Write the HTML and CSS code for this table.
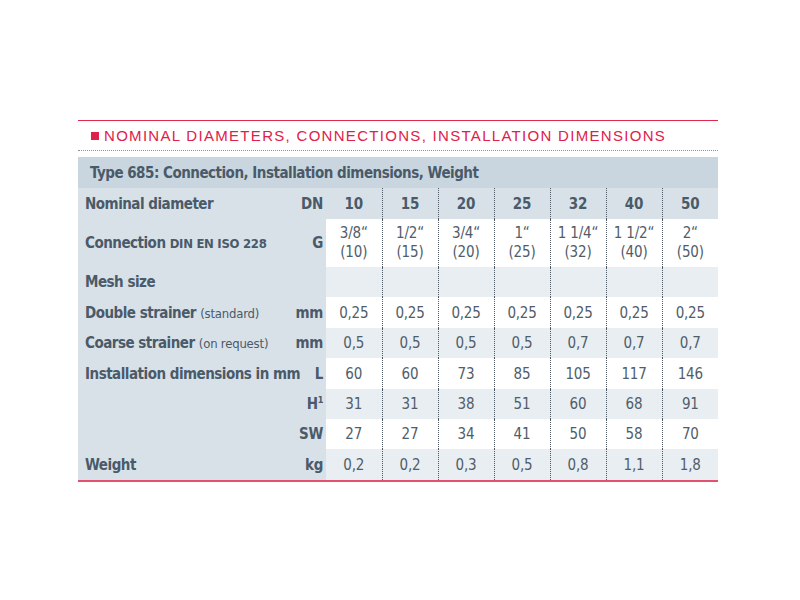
FILE: index.html
```html
<!DOCTYPE html>
<html>
<head>
<meta charset="utf-8">
<link rel="stylesheet" href="styles.css">
</head>
<body>
<div class="sheet">
  <div class="heading"><span class="square"></span>NOMINAL DIAMETERS, CONNECTIONS, INSTALLATION DIMENSIONS</div>
  <table class="spec">
    <colgroup><col class="c-lbl"><col class="c-unit"><col class="c-d"><col class="c-d"><col class="c-d"><col class="c-d"><col class="c-d"><col class="c-d"><col class="c-d"></colgroup>
    <tr class="title"><td colspan="9">Type 685: Connection, Installation dimensions, Weight</td></tr>
    <tr class="dn"><th class="lbl">Nominal diameter</th><th class="unit">DN</th><td>10</td><td>15</td><td>20</td><td>25</td><td>32</td><td>40</td><td>50</td></tr>
    <tr class="conn white"><th class="lbl">Connection <span class="small">DIN EN ISO 228</span></th><th class="unit">G</th><td>3/8“<br>(10)</td><td>1/2“<br>(15)</td><td>3/4“<br>(20)</td><td>1“<br>(25)</td><td>1 1/4“<br>(32)</td><td>1 1/2“<br>(40)</td><td>2“<br>(50)</td></tr>
    <tr class="light r30"><th class="lbl">Mesh size</th><th class="unit"></th><td></td><td></td><td></td><td></td><td></td><td></td><td></td></tr>
    <tr class="white"><th class="lbl">Double strainer <span class="note">(standard)</span></th><th class="unit">mm</th><td>0,25</td><td>0,25</td><td>0,25</td><td>0,25</td><td>0,25</td><td>0,25</td><td>0,25</td></tr>
    <tr class="light r30"><th class="lbl">Coarse strainer <span class="note">(on request)</span></th><th class="unit">mm</th><td>0,5</td><td>0,5</td><td>0,5</td><td>0,5</td><td>0,7</td><td>0,7</td><td>0,7</td></tr>
    <tr class="white"><th class="lbl">Installation dimensions in mm</th><th class="unit">L</th><td>60</td><td>60</td><td>73</td><td>85</td><td>105</td><td>117</td><td>146</td></tr>
    <tr class="light r30"><th class="lbl"></th><th class="unit">H<sup>1</sup></th><td>31</td><td>31</td><td>38</td><td>51</td><td>60</td><td>68</td><td>91</td></tr>
    <tr class="white r30"><th class="lbl"></th><th class="unit">SW</th><td>27</td><td>27</td><td>34</td><td>41</td><td>50</td><td>58</td><td>70</td></tr>
    <tr class="light"><th class="lbl">Weight</th><th class="unit">kg</th><td>0,2</td><td>0,2</td><td>0,3</td><td>0,5</td><td>0,8</td><td>1,1</td><td>1,8</td></tr>
  </table>
</div>
</body>
</html>
```

FILE: styles.css
```css
html, body {
  margin: 0;
  padding: 0;
  background: #ffffff;
}
.sheet {
  width: 640px;
  margin: 120px 0 0 78px;
  font-family: "DejaVu Sans Condensed", "Liberation Sans Narrow", "Liberation Sans", sans-serif;
  font-stretch: condensed;
  color: #4f5e6b;
}
.heading {
  border-top: 1.5px solid #e0284f;
  border-bottom: 1px dotted #8a949c;
  height: 29px;
  display: flex;
  align-items: center;
  padding-left: 13px;
  font-family: "Liberation Sans", Arial, sans-serif;
  font-stretch: normal;
  font-size: 15px;
  letter-spacing: 1.3px;
  color: #e0204a;
}
.square {
  display: inline-block;
  width: 8px;
  height: 8px;
  background: #e0204a;
  margin-right: 5px;
}
.spec {
  margin-top: 6px;
  width: 640px;
  border-collapse: collapse;
  table-layout: fixed;
  border-bottom: 2px solid #e4506f;
}
.c-lbl { width: 210px; }
.c-unit { width: 38px; }
.c-d { width: 56px; }
.spec td, .spec th {
  padding: 0;
  height: 31px;
  font-size: 15px;
}
.spec tr.r30 td, .spec tr.r30 th {
  height: 30px;
}
.spec tr.title td {
  background: #c9d6df;
  font-weight: bold;
  text-align: left;
  padding-left: 12px;
  height: 31px;
  color: #4a5a68;
  border-left: none;
  letter-spacing: -0.5px;
}
.spec th.lbl {
  background: #d8e1e8;
  text-align: left;
  padding-left: 7px;
  font-weight: bold;
  white-space: nowrap;
  color: #4a5a68;
  letter-spacing: -0.5px;
}
.spec th.unit {
  background: #d8e1e8;
  text-align: right;
  padding-right: 3px;
  font-weight: bold;
  color: #4a5a68;
  letter-spacing: -0.3px;
}
.spec td {
  text-align: center;
  color: #515d69;
  border-left: 1px dotted #4f5963;
  letter-spacing: -0.2px;
}
.spec tr td:nth-child(3) {
  border-left: none;
}
.spec tr.dn td {
  background: #d8e1e8;
  font-weight: bold;
  color: #4a5a68;
}
.spec tr.conn td, .spec tr.conn th {
  height: 48px;
  line-height: 19px;
}
.spec tr.white td {
  background: #ffffff;
}
.spec tr.light td {
  background: #e8eef1;
}
.small {
  font-size: 13px;
  letter-spacing: -0.3px;
}
.note {
  font-weight: normal;
  font-size: 13px;
  letter-spacing: -0.2px;
}
sup {
  font-size: 9px;
  vertical-align: 6px;
  line-height: 0;
}
```
